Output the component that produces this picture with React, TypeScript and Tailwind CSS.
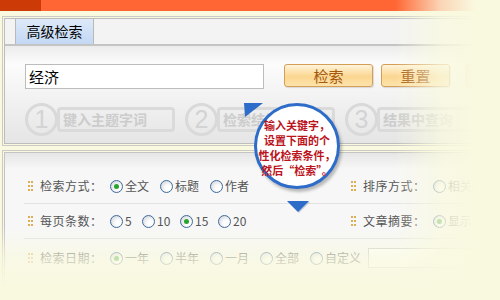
import React from "react";

// little 2x3 dot handle in front of each option label
function Grip() {
  return (
    <span className="grid grid-cols-[2px_2px] gap-x-px gap-y-[2px] w-[5px] mr-[7px] shrink-0">
      {[0, 1, 2, 3, 4, 5].map((i) => (
        <span key={i} className="w-[2px] h-[2px] bg-[#dcae55]" />
      ))}
    </span>
  );
}

function Radio({ label, checked = false, w }: { label: string; checked?: boolean; w: string }) {
  return (
    <label className={`flex items-center gap-[2px] shrink-0 ${w}`}>
      <span className="w-[13px] h-[13px] rounded-full border border-[#3f6a9c] bg-[radial-gradient(circle_at_65%_65%,#ffffff_25%,#c8ccd3_100%)] flex items-center justify-center">
        {checked && <span className="w-[5px] h-[5px] rounded-full bg-[#29a32a]" />}
      </span>
      <span className="text-[12px] text-[#555] leading-none">{label}</span>
    </label>
  );
}

function Step({ n, text }: { n: number; text: string }) {
  return (
    <div className="flex items-center w-[150px] shrink-0 mr-[10px]">
      <div className="relative z-10 w-[33px] h-[33px] rounded-full border-[3px] border-[#d9d9d9] flex items-center justify-center font-['Liberation_Sans'] text-[25px] text-[#d3d3d3] leading-none">
        {n}
      </div>
      <div className="-ml-[1px] w-[118px] h-[25px] border-[3px] border-[#dadada] rounded-[4px] pl-[3px] flex items-center text-[14px] font-bold text-[#cccccc] whitespace-nowrap overflow-hidden">
        {text}
      </div>
    </div>
  );
}

function OrangeButton({ children, w }: { children?: React.ReactNode; w: string }) {
  return (
    <button
      className={`${w} h-[23px] rounded-[3px] border border-[#d49d58] bg-[linear-gradient(#fff4da,#fbd690_55%,#fde3ab)] shadow-[1px_1px_1px_rgba(0,0,0,0.12)] text-[15px] leading-none text-[#a5580c] flex items-center justify-center`}
    >
      {children}
    </button>
  );
}

export default function App() {
  return (
    <div className="relative w-[500px] h-[300px] overflow-hidden bg-[#f9f9e0] font-['Noto_Sans_CJK_SC',sans-serif]">
      {/* top strip */}
      <div className="flex h-[11px]">
        <div className="w-[41px] bg-[#cc3a08]" />
        <div className="flex-1 bg-[#ff6633]" />
      </div>

      <div className="w-[580px] pt-[5px] pl-[2px]">
        {/* search panel */}
        <div className="border border-[#cacaca] p-px">
          <div className="border border-[#bdbdbd]">
            <div className="h-[27px] flex bg-[#f3f3f3] border-b-2 border-[#c4c4c4] pl-[10px]">
              <div className="w-[79px] border-x border-[#b9b9b9] bg-[linear-gradient(#dde9f8,#c3d8f3)] flex items-center justify-center text-[14px] text-black">
                高级检索
              </div>
            </div>

            <div className="h-[97px] bg-[linear-gradient(#ececec_0px,#fcfcfc_18px,#e5e5e5_100%)] pl-[20px] pt-[18px]">
              <div className="flex items-start">
                <input
                  readOnly
                  value="经济"
                  className="w-[239px] h-[25px] border border-[#bcbcbc] bg-white pl-[3px] text-[15px] text-black outline-none"
                />
                <div className="ml-[20px]">
                  <OrangeButton w="w-[89px]">检索</OrangeButton>
                </div>
                <div className="ml-[8px]">
                  <OrangeButton w="w-[69px]">重置</OrangeButton>
                </div>
                <div className="ml-[16px]">
                  <OrangeButton w="w-[69px]" />
                </div>
              </div>

              <div className="flex mt-[14px]">
                <Step n={1} text="键入主题字词" />
                <Step n={2} text="检索结果" />
                <Step n={3} text="结果中查询" />
              </div>
            </div>
          </div>
        </div>

        {/* options panel */}
        <div className="mt-[4px] border border-[#cacaca] p-px h-[160px]">
          <div className="h-full border border-[#c4c4c4] bg-[linear-gradient(#e6e6e6_0px,#f7f7f7_16px,#f7f7f7_100%)] pl-[19px] pt-[16px]">
            <div className="flex items-center h-[35px] border-b border-[#e3e3e3]">
              <div className="flex items-center w-[327px] pl-[4px]">
                <Grip />
                <span className="w-[70px] text-[12px] text-[#555] tracking-[0.5px]">检索方式：</span>
                <Radio label="全文" checked w="w-[50px]" />
                <Radio label="标题" w="w-[50px]" />
                <Radio label="作者" w="w-[50px]" />
              </div>
              <div className="flex items-center">
                <Grip />
                <span className="w-[70px] text-[12px] text-[#555] tracking-[0.5px]">排序方式：</span>
                <Radio label="相关度" w="w-[60px]" />
                <Radio label="时间" w="w-[50px]" />
              </div>
            </div>

            <div className="flex items-center h-[35px] border-b border-[#e3e3e3]">
              <div className="flex items-center w-[327px] pl-[4px]">
                <Grip />
                <span className="w-[70px] text-[12px] text-[#555] tracking-[0.5px]">每页条数：</span>
                <Radio label="5" w="w-[32px]" />
                <Radio label="10" w="w-[38px]" />
                <Radio label="15" checked w="w-[38px]" />
                <Radio label="20" w="w-[38px]" />
              </div>
              <div className="flex items-center">
                <Grip />
                <span className="w-[70px] text-[12px] text-[#555] tracking-[0.5px]">文章摘要：</span>
                <Radio label="显示" checked w="w-[50px]" />
                <Radio label="隐藏" w="w-[50px]" />
              </div>
            </div>

            <div className="flex items-center h-[38px] pl-[4px]">
              <Grip />
              <span className="w-[70px] text-[12px] text-[#555] tracking-[0.5px]">检索日期：</span>
              <Radio label="一年" checked w="w-[50px]" />
              <Radio label="半年" w="w-[50px]" />
              <Radio label="一月" w="w-[50px]" />
              <Radio label="全部" w="w-[50px]" />
              <Radio label="自定义" w="w-[58px]" />
              <span className="w-[200px] h-[20px] border border-[#c8c8c8] bg-white" />
            </div>
          </div>
        </div>
      </div>

      {/* washes out toward the right edge and the bottom */}
      <div className="pointer-events-none absolute inset-0 bg-[linear-gradient(to_right,transparent_79%,rgba(249,249,224,0.75)_88%,#f9f9e0_95%)]" />
      <div className="pointer-events-none absolute inset-0 bg-[linear-gradient(to_bottom,transparent_76%,rgba(249,249,224,0.72)_86%,#f9f9e0_95%)]" />

      {/* hint bubble */}
      <svg className="absolute left-[244px] top-[103px]" width="19" height="15" viewBox="0 0 19 15">
        <polygon points="0,0 19,0 1,14" fill="#2d6cc9" />
      </svg>
      <svg className="absolute left-[287px] top-[201px]" width="24" height="13" viewBox="0 0 24 13">
        <polygon points="1,1 23,1 12,12" fill="#9aa6b8" opacity="0.5" />
        <polygon points="0,0 22,0 11,11" fill="#2d6cc9" />
      </svg>
      <div className="absolute left-[254px] top-[103px] w-[86px] h-[86px] rounded-full border-[3px] border-[#2d6cc9] bg-white shadow-[2px_3px_3px_rgba(0,0,0,0.25)] flex items-center justify-center pt-[3px]">
        <p className="text-center text-[11px] leading-[15px] font-bold text-[#bb141d] whitespace-nowrap">
          输入关键字，
          <br />
          设置下面的个
          <br />
          性化检索条件，
          <br />
          然后“检索”。
        </p>
      </div>
    </div>
  );
}
